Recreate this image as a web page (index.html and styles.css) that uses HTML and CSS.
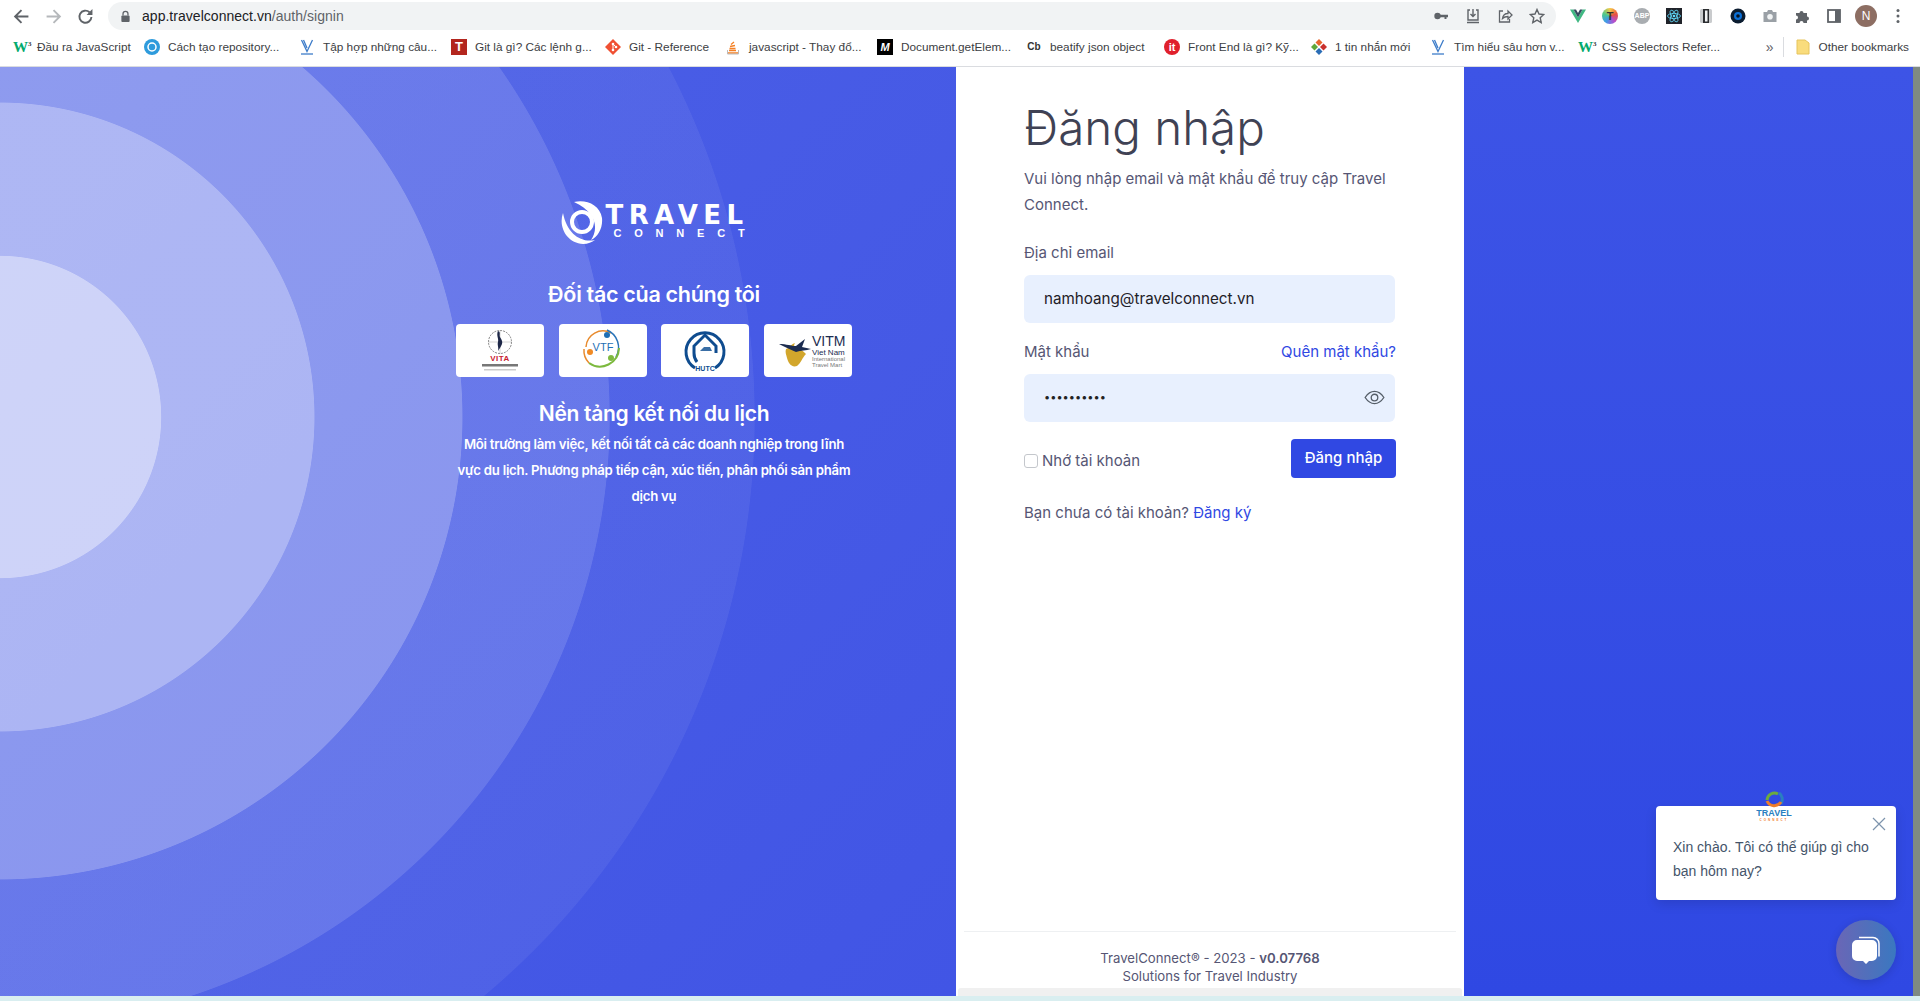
FILE: index.html
```html
<!DOCTYPE html>
<html lang="vi">
  <head>
    <meta charset="UTF-8" />
    <meta name="viewport" content="width=device-width, initial-scale=1.0" />
    <title>Travel Connect</title>
    <link rel="stylesheet" href="styles.css">
  </head>
  <body>
    <header class="chrome">
      <div class="toolbar">
        <div class="nav">
          <svg class="nav-icon" viewBox="0 0 16 16"><path d="M14.500 8H2.500M8 2 2 8l6 6" fill="none" stroke="#5f6368" stroke-width="1.800"/></svg>
          <svg class="nav-icon" viewBox="0 0 16 16"><path d="M1.500 8h12M8 2l6 6-6 6" fill="none" stroke="#b5b8bb" stroke-width="1.800"/></svg>
          <svg class="nav-icon" viewBox="0 0 16 16"><path d="M13.600 8.500A5.700 5.700 0 1 1 11.800 4" fill="none" stroke="#5f6368" stroke-width="1.800"/><path d="M14.500 1v5.500H9z" fill="#5f6368"/></svg>
        </div>
        <div class="omnibox">
          <svg class="lock" viewBox="0 0 12 14"><path d="M3.300 6V4a2.700 2.700 0 0 1 5.400 0v2" fill="none" stroke="#5f6368" stroke-width="1.400"/><rect x="1.500" y="6" width="9" height="7" rx="1" fill="#5f6368"/></svg>
          <span class="url">app.travelconnect.vn<span class="url-path">/auth/signin</span></span>
          <div class="omni-actions">
            <svg class="tool-icon" viewBox="0 0 16 16"><circle cx="4.500" cy="8" r="3.200" fill="#5f6368"/><path d="M7 6.700h8v2.600h-1.500V11h-2V9.300H7z" fill="#5f6368"/></svg>
            <svg class="tool-icon" viewBox="0 0 16 16"><path d="M5 2H3v10h10V2h-2M8 1v7.500M5.500 6 8 8.500 10.500 6M2 14.500h12" fill="none" stroke="#5f6368" stroke-width="1.400"/></svg>
            <svg class="tool-icon" viewBox="0 0 16 16"><path d="M6 3H2.500v11h10v-3M5.500 10.500C6 7 8.500 5.500 11 5.500V3l4 4-4 4V8.500c-2 0-4 .5-5.500 2z" fill="none" stroke="#5f6368" stroke-width="1.300"/></svg>
            <svg class="tool-icon" viewBox="0 0 16 16"><path d="m8 1.500 2 4.500 4.800.5-3.600 3.200 1 4.800L8 12.100l-4.200 2.400 1-4.800L1.200 6.500 6 6z" fill="none" stroke="#5f6368" stroke-width="1.400"/></svg>
          </div>
        </div>
        <div class="extensions">
          <svg class="ext-icon" viewBox="0 0 16 16"><path d="M0 1.500h3.500L8 9.500l4.500-8H16L8 15z" fill="#41b883"/><path d="M3.500 1.500H6L8 5l2-3.500h2.500L8 9.500z" fill="#35495e"/></svg>
          <span class="ext-t">T</span>
          <span class="ext-abp">ABP</span>
          <svg class="ext-icon" viewBox="0 0 16 16"><rect width="16" height="16" fill="#20232a"/><g fill="none" stroke="#61dafb" stroke-width=".8"><ellipse cx="8" cy="8" rx="6.500" ry="2.600"/><ellipse cx="8" cy="8" rx="6.500" ry="2.600" transform="rotate(60 8 8)"/><ellipse cx="8" cy="8" rx="6.500" ry="2.600" transform="rotate(120 8 8)"/></g><circle cx="8" cy="8" r="1.300" fill="#61dafb"/></svg>
          <svg class="ext-icon" viewBox="0 0 16 16"><rect x="2" y="1" width="12" height="14" rx="1.500" fill="#c9cbcd"/><rect x="5" y="1" width="6" height="14" fill="#2b2d30"/><rect x="7" y="2.500" width="2.500" height="11" fill="#f1f3f4"/></svg>
          <svg class="ext-icon" viewBox="0 0 16 16"><circle cx="8" cy="8" r="7.500" fill="#0b1c30"/><circle cx="8" cy="8" r="4" fill="#0b6fd6"/><circle cx="8" cy="8" r="1.800" fill="#06131f"/></svg>
          <svg class="ext-icon" viewBox="0 0 16 16"><path d="M1.500 4H5l1-2h4l1 2h3.500v10h-13z" fill="#9aa0a6"/><circle cx="8" cy="8.800" r="2.800" fill="#f1f3f4"/></svg>
          <svg class="ext-icon" viewBox="0 0 16 16"><path d="M2 5h3.500a2 2 0 1 1 4 0H13v3.500a2 2 0 1 1 0 4V15H9.500a2 2 0 1 0-4 0H2v-3.500a2 2 0 1 0 0-4z" fill="#5f6368"/></svg>
          <svg class="ext-icon" viewBox="0 0 16 16"><rect x="2" y="2" width="12" height="12" fill="none" stroke="#5f6368" stroke-width="1.800"/><rect x="9" y="2" width="5" height="12" fill="#5f6368"/></svg>
          <span class="avatar">N</span>
          <svg class="ext-icon" viewBox="0 0 16 16"><g fill="#5f6368"><circle cx="8" cy="2.500" r="1.500"/><circle cx="8" cy="8" r="1.500"/><circle cx="8" cy="13.500" r="1.500"/></g></svg>
        </div>
      </div>

      <nav class="bookmarks">
        <div class="bookmark-grid">
          <a class="bookmark"><span class="fav fav-w3">W<sup>3</sup></span>Đầu ra JavaScript</a>
          <a class="bookmark"><svg class="fav-svg" viewBox="0 0 16 16"><circle cx="8" cy="8" r="8" fill="#2e9bdc"/><rect x="4" y="4" width="8" height="8" rx="4" fill="none" stroke="#fff" stroke-width="1.500"/></svg>Cách tạo repository...</a>
          <a class="bookmark"><svg class="fav-svg" viewBox="0 0 16 16"><path d="M2.500 1 8 12.500 13.500 1M4.500 1 8 9" fill="none" stroke="#3d7cc9" stroke-width="1.300"/><path d="M2 15h12" stroke="#3d7cc9" stroke-width="1.300"/></svg>Tập hợp những câu...</a>
          <a class="bookmark"><span class="fav fav-t">T</span>Git là gì? Các lệnh g...</a>
          <a class="bookmark"><svg class="fav-svg" viewBox="0 0 16 16"><path d="M8 0 16 8 8 16 0 8z" fill="#f05033"/><circle cx="8" cy="5" r="1.300" fill="#fff"/><circle cx="8" cy="11" r="1.300" fill="#fff"/><circle cx="11" cy="8" r="1.300" fill="#fff"/><path d="M8 5v6M8 5l3 3" stroke="#fff"/></svg>Git - Reference</a>
          <a class="bookmark"><svg class="fav-svg" viewBox="0 0 16 16"><path d="M3 14h10M4 11.500h7M4.500 9.500h6M5 7.500l5-1M6 5.500 9 3" stroke="#f48024" stroke-width="1.300" fill="none"/><path d="M2.500 11v4h11v-4" fill="none" stroke="#bcbbbb"/></svg>javascript - Thay đổ...</a>
          <a class="bookmark"><span class="fav fav-m">M</span>Document.getElem...</a>
          <a class="bookmark"><span class="fav fav-cb">Cb</span>beatify json object</a>
          <a class="bookmark"><span class="fav fav-it">it</span>Front End là gì? Kỹ...</a>
          <a class="bookmark"><svg class="fav-svg" viewBox="0 0 16 16"><path d="m8 0 3.500 3.500L8 7 4.500 3.500z" fill="#e8662c"/><path d="m12.500 4.500 3.500 3.500-3.500 3.500L9 8z" fill="#c9302c"/><path d="m3.500 4.500 3.500 3.500-3.500 3.500L0 8z" fill="#5fa83b"/><path d="m8 9 3.500 3.500L8 16l-3.500-3.500z" fill="#2a6db5"/></svg>1 tin nhắn mới</a>
          <a class="bookmark"><svg class="fav-svg" viewBox="0 0 16 16"><path d="M2.500 1 8 12.500 13.500 1M4.500 1 8 9" fill="none" stroke="#3d7cc9" stroke-width="1.300"/><path d="M2 15h12" stroke="#3d7cc9" stroke-width="1.300"/></svg>Tìm hiểu sâu hơn v...</a>
          <a class="bookmark"><span class="fav fav-w3">W<sup>3</sup></span>CSS Selectors Refer...</a>
        </div>
        <div class="bookmarks-end">
          <span class="more">»</span>
          <span class="sep"></span>
          <svg class="fav-svg" viewBox="0 0 16 16"><path d="M2 1h8l4 3v11H2z" fill="#f9dc7c" stroke="#e6c45c"/></svg>
          <span>Other bookmarks</span>
        </div>
      </nav>
    </header>

    <main class="page">
      <section class="intro">
        <div class="brand">
          <svg class="brand-mark" viewBox="0 0 42 44">
            <circle cx="21" cy="22" r="10" fill="none" stroke="#fff" stroke-width="4"/>
            <path d="M13 2C24-1 39 4 41 18c1 10-4 19-11 22 7-10 7-27-17-38z" fill="#fff"/>
            <path d="M2 13C-3 27 6 43 22 44c5 0 9-2 12-4C20 43 6 34 2 13z" fill="#fff"/>
          </svg>
          <div class="brand-name">
            <span class="brand-travel">TRAVEL</span>
            <span class="brand-connect">CONNECT</span>
          </div>
        </div>

        <h2 class="partners-title">Đối tác của chúng tôi</h2>

        <div class="partners">
          <div class="partner">
            <svg viewBox="0 0 88 53">
              <circle cx="44" cy="18" r="11.500" fill="none" stroke="#555" stroke-width=".7" stroke-dasharray="2 1"/>
              <path d="M32.500 18h23M44 6.500v23" stroke="#aaa" stroke-width=".5"/>
              <path d="M42 7c3 1 1 4 2 6s3 4 2 7-3 5-4 7c1-4-1-6 0-9s-2-7 0-11z" fill="#1d2747"/>
              <text class="logo-vita" x="44" y="37" text-anchor="middle">VITA</text>
              <rect x="26" y="40" width="36" height="2.500" fill="#777"/>
              <rect x="28" y="45" width="32" height="1.500" fill="#ccc"/>
            </svg>
          </div>
          <div class="partner">
            <svg viewBox="0 0 88 53">
              <path d="M27 23a17 17 0 0 1 25-14" fill="none" stroke="#e88b2e" stroke-width="1.500"/>
              <path d="M48 6a19 19 0 0 1 9 27" fill="none" stroke="#2a74b8" stroke-width="1.500"/>
              <path d="M60 24a19 19 0 0 1-30 15" fill="none" stroke="#7cb93e" stroke-width="2"/>
              <path d="M30 39a18 18 0 0 1-5-14" fill="none" stroke="#e88b2e" stroke-width="1.500"/>
              <circle cx="48" cy="11" r="3" fill="#1f6fb5"/>
              <circle cx="31" cy="28" r="3" fill="#f08a24"/>
              <circle cx="52" cy="34" r="3" fill="#7fb940"/>
              <text class="logo-vtf" x="44" y="27" text-anchor="middle">VTF</text>
            </svg>
          </div>
          <div class="partner">
            <svg viewBox="0 0 88 53">
              <path d="M34 44a19 19 0 1 1 20 0" fill="none" stroke="#0f4c8f" stroke-width="3"/>
              <path d="M36 38a14 14 0 0 1-3-9V22l11-11 11 11v7" fill="none" stroke="#0f4c8f" stroke-width="3"/>
              <path d="M39 27h12l-2-4h-6z" fill="#3a6ea5"/>
              <text class="logo-hutc" x="44" y="47" text-anchor="middle">HUTC</text>
            </svg>
          </div>
          <div class="partner">
            <svg viewBox="0 0 88 53">
              <path d="M22 25c4-1 5-5 9-6-2 3 0 4 1 6 3-1 7 2 10 5-4 4-5 9-9 12-6 2-9-4-10-8s-2-6-1-9z" fill="#d2a62c"/>
              <path d="M15 20c8 0 12 2 17 2l9-7-3 8 9 2c-5 2-10 1-15 3-6-3-12-5-17-8z" fill="#1c2c50"/>
              <text class="logo-vitm" x="48" y="22">VITM</text>
              <text class="logo-vitm-sub" x="48" y="31">Viet Nam</text>
              <text class="logo-vitm-tiny" x="48" y="37">International</text>
              <text class="logo-vitm-tiny" x="48" y="43">Travel Mart</text>
            </svg>
          </div>
        </div>

        <h2 class="platform-title">Nền tảng kết nối du lịch</h2>
        <p class="platform-text">Môi trường làm việc, kết nối tất cả các doanh nghiệp trong lĩnh vực du lịch. Phương pháp tiếp cận, xúc tiến, phân phối sản phẩm dịch vụ</p>
      </section>

      <section class="signin">
        <div class="signin-form">
          <h1>Đăng nhập</h1>
          <p class="lead">Vui lòng nhập email và mật khẩu để truy cập Travel Connect.</p>

          <div class="form-group">
            <label for="email">Địa chỉ email</label>
            <input type="text" id="email" value="namhoang@travelconnect.vn" />
          </div>

          <div class="form-group">
            <div class="label-row">
              <label for="password">Mật khẩu</label>
              <a class="link">Quên mật khẩu?</a>
            </div>
            <div class="password-box">
              <input type="password" id="password" value="1234567890" />
              <svg class="eye" viewBox="0 0 22 16"><path d="M1 8c3-4.500 6-6.500 10-6.500S18 3.500 21 8c-3 4.500-6 6.500-10 6.500S4 12.500 1 8z" fill="none" stroke="#555e68" stroke-width="1.400"/><circle cx="11" cy="8" r="3.500" fill="none" stroke="#555e68" stroke-width="1.400"/></svg>
            </div>
          </div>

          <div class="actions">
            <label class="remember"><span class="checkbox"></span>Nhớ tài khoản</label>
            <button type="button">Đăng nhập</button>
          </div>

          <p class="register">Bạn chưa có tài khoản? <a class="link">Đăng ký</a></p>
        </div>

        <footer class="signin-footer">
          <div>TravelConnect® - 2023 - <b>v0.07768</b></div>
          <div>Solutions for Travel Industry</div>
        </footer>
        <div class="footer-strip"></div>
      </section>

      <section class="filler"></section>

      <div class="scrollbar"></div>

      <aside class="chat-popup">
        <svg class="chat-logo" viewBox="0 0 44 34">
          <path d="M15 11a7.500 7.500 0 0 1 11-6" fill="none" stroke="#6cab3f" stroke-width="3"/>
          <path d="M27 4a8 8 0 0 1 2 11" fill="none" stroke="#2a7fc0" stroke-width="3"/>
          <path d="M29 13a8 8 0 0 1-14-1" fill="none" stroke="#ef7d2b" stroke-width="3"/>
          <text class="chat-logo-name" x="22" y="27" text-anchor="middle">TRAVEL</text>
          <text class="chat-logo-sub" x="22" y="32" text-anchor="middle">CONNECT</text>
        </svg>
        <svg class="chat-close" viewBox="0 0 14 14"><path d="m1 1 12 12M13 1 1 13" stroke="#7d94ad" stroke-width="1.200"/></svg>
        Xin chào. Tôi có thể giúp gì cho bạn hôm nay?
      </aside>

      <div class="chat-button">
        <svg viewBox="0 0 32 32">
          <path d="M9 3.500h14a6 6 0 0 1 6 6v13" fill="none" stroke="#fff" stroke-width="1.500"/>
          <path d="M7 6h15a5 5 0 0 1 5 5v11a5 5 0 0 1-5 5h-3l-3 3-3-3H7a5 5 0 0 1-5-5V11a5 5 0 0 1 5-5z" fill="#fff"/>
        </svg>
      </div>
    </main>
  </body>
</html>
```

FILE: styles.css
```css
* {
  box-sizing: border-box;
}
html,
body {
  height: 100%;
}
body {
  margin: 0;
  display: flex;
  flex-direction: column;
  overflow: hidden;
  font-family: Inter, "Noto Sans", sans-serif;
  background-color: #d9eef0;
  color: #565674;
}

/* browser chrome */
.chrome {
  height: 67px;
  flex: none;
  background-color: white;
  border-bottom: 1px solid #dadce0;
  font-family: "Liberation Sans", Arial, sans-serif;
}
.toolbar {
  height: 32px;
  padding: 2px 0 0 6px;
  display: flex;
  align-items: flex-start;
}
.nav {
  width: 102px;
  height: 28px;
  display: flex;
  align-items: center;
  gap: 15px;
  padding-left: 7px;
}
.nav-icon {
  width: 17px;
  height: 17px;
}
.omnibox {
  width: 1448px;
  height: 28px;
  border-radius: 14px;
  background-color: #f1f3f4;
  display: flex;
  align-items: center;
  padding: 0 11px 0 12px;
}
.lock {
  width: 11px;
  height: 13px;
  margin-right: 11px;
}
.url {
  font-size: 14px;
  letter-spacing: 0.03px;
  color: #202124;
}
.url-path {
  color: #5f6368;
}
.omni-actions {
  margin-left: auto;
  display: flex;
  gap: 16px;
}
.tool-icon {
  width: 16px;
  height: 16px;
}
.extensions {
  height: 28px;
  display: flex;
  align-items: center;
  gap: 16px;
  padding-left: 14px;
}
.ext-icon {
  width: 16px;
  height: 16px;
  flex: none;
}
.ext-t {
  width: 16px;
  height: 16px;
  border-radius: 50%;
  background: conic-gradient(#f6c945, #e8503f, #b44fd0, #3f9be8, #4fc98a, #f6c945);
  font-size: 11px;
  font-weight: bold;
  text-align: center;
  line-height: 16px;
  color: #333;
}
.ext-abp {
  width: 16px;
  height: 16px;
  border-radius: 50%;
  background-color: #a9adb1;
  font-size: 7px;
  font-weight: bold;
  text-align: center;
  line-height: 16px;
  color: white;
}
.avatar {
  width: 22px;
  height: 22px;
  margin: 0 -3px;
  flex: none;
  border-radius: 50%;
  background-color: #8d6e63;
  color: white;
  font-size: 12px;
  text-align: center;
  line-height: 22px;
}

.bookmarks {
  height: 30px;
  padding-left: 13px;
  display: flex;
  align-items: center;
  font-size: 11.8px;
  color: #3c4043;
}
.bookmark-grid {
  display: grid;
  grid-template-columns: 131px 155px 152px 154px 120px 152px 149px 138px 147px 119px 148px 150px;
}
.bookmark {
  display: flex;
  align-items: center;
  gap: 8px;
  white-space: nowrap;
}
.fav,
.fav-svg {
  width: 16px;
  height: 16px;
  flex: none;
}
.fav {
  display: block;
  text-align: center;
  line-height: 16px;
  font-weight: bold;
}
.fav-w3 {
  color: #04aa6d;
  font-size: 15px;
  font-family: "Liberation Serif", serif;
  white-space: nowrap;
}
.fav-w3 sup {
  font-size: 7px;
  line-height: 0;
  color: #333;
}
.fav-t {
  background-color: #b3261e;
  color: white;
  font-size: 13px;
}
.fav-m {
  background-color: black;
  color: white;
  font-size: 11px;
  font-style: italic;
}
.fav-cb {
  color: #333;
  font-size: 10px;
}
.fav-it {
  background-color: #e0202c;
  color: white;
  border-radius: 50%;
  font-size: 11px;
}
.bookmarks-end {
  margin-left: auto;
  padding-right: 11px;
  display: flex;
  align-items: center;
  gap: 8px;
}
.more {
  font-size: 14px;
  color: #5f6368;
  margin-right: 1px;
}
.sep {
  width: 1px;
  height: 20px;
  background-color: #dadce0;
  margin-right: 3px;
}

/* page */
.page {
  position: relative;
  height: 929px;
  flex: none;
  display: flex;
  background: linear-gradient(180deg, #3d54e6, #2f48e3);
}
.intro {
  width: 956px;
  flex: none;
  padding: 133px 0 0 352px;
  display: flex;
  flex-direction: column;
  align-items: center;
  color: white;
  background:
    radial-gradient(circle 755px at 0 350px,
      rgba(255, 255, 255, 0.73) 21.3%, rgba(255, 255, 255, 0.55) 21.4%,
      rgba(255, 255, 255, 0.55) 41.6%, rgba(255, 255, 255, 0.37) 41.7%,
      rgba(255, 255, 255, 0.37) 61.2%, rgba(255, 255, 255, 0.18) 61.3%,
      rgba(255, 255, 255, 0.18) 80.7%, rgba(255, 255, 255, 0.06) 80.8%,
      rgba(255, 255, 255, 0.06) 99.9%, rgba(255, 255, 255, 0) 100%),
    linear-gradient(135deg, #4c60e6 0, #4155e5 100%);
}
.brand {
  width: 188px;
  height: 45px;
  display: flex;
  gap: 3px;
  margin-left: 1px;
}
.brand-mark {
  width: 42px;
  height: 44px;
  flex: none;
}
.brand-name {
  display: flex;
  flex-direction: column;
  font-family: "DejaVu Sans", sans-serif;
  font-weight: bold;
  padding-top: 3px;
}
.brand-travel {
  font-size: 26px;
  line-height: 25px;
  letter-spacing: 5.4px;
}
.brand-connect {
  font-family: "Liberation Sans", Arial, sans-serif;
  font-size: 11px;
  line-height: 11px;
  letter-spacing: 12.8px;
  padding-left: 8px;
  white-space: nowrap;
}
.partners-title {
  margin: 34px 0 0;
  font-size: 21.5px;
  line-height: 30px;
  font-weight: 600;
  letter-spacing: -0.3px;
}
.partners {
  margin-top: 15px;
  width: 396px;
  display: grid;
  grid-template-columns: repeat(4, 88px);
  justify-content: space-between;
}
.partner {
  height: 53px;
  border-radius: 4px;
  background-color: white;
}
.partner svg {
  display: block;
  width: 100%;
  height: 100%;
}
.logo-vita {
  font: bold 8px "Liberation Sans", sans-serif;
  fill: #c8202f;
  letter-spacing: 0.5px;
}
.logo-vtf {
  font: 11px "Liberation Sans", sans-serif;
  fill: #1f6fb5;
}
.logo-hutc {
  font: bold 7px "Liberation Sans", sans-serif;
  fill: #0f4c8f;
}
.logo-vitm {
  font: 14px "Liberation Sans", sans-serif;
  fill: #1c2c50;
}
.logo-vitm-sub {
  font: 8px "Liberation Sans", sans-serif;
  fill: #1c2c50;
}
.logo-vitm-tiny {
  font: 6px "Liberation Sans", sans-serif;
  fill: #777;
}
.platform-title {
  margin: 22px 0 0;
  font-size: 21px;
  line-height: 30px;
  font-weight: 600;
  letter-spacing: -0.3px;
}
.platform-text {
  margin: 2px 0 0;
  width: 402px;
  font-size: 13.2px;
  line-height: 26px;
  font-weight: 600;
  text-align: center;
  letter-spacing: -0.25px;
}

/* sign in card */
.signin {
  width: 508px;
  flex: none;
  background-color: white;
  display: flex;
  flex-direction: column;
}
.signin-form {
  flex: 1;
  padding: 26px 68px 0;
}
h1 {
  margin: 0;
  font-size: 47.5px;
  line-height: 70px;
  font-weight: 300;
  color: #3f4254;
}
.lead {
  margin: 3px 0 0;
  font-size: 15px;
  line-height: 26px;
}
.form-group {
  margin-top: 22px;
}
label {
  display: block;
  font-size: 15px;
  line-height: 26px;
}
.label-row {
  display: flex;
  justify-content: space-between;
}
.link {
  font-size: 15px;
  line-height: 26px;
  color: #3048e3;
}
.form-group input {
  display: block;
  width: 371px;
  height: 48px;
  margin-top: 9px;
  padding: 0 20px 2px;
  border: none;
  border-radius: 6px;
  outline: none;
  background-color: #e8f0fe;
  font-family: inherit;
  font-size: 15.2px;
  color: #1f2128;
}
.form-group input[type="password"] {
  font-size: 11px;
  color: #222;
}
.form-group + .form-group {
  margin-top: 16px;
}
.password-box {
  position: relative;
}
.eye {
  position: absolute;
  right: 11px;
  top: 16px;
  width: 21px;
  height: 15px;
}
.actions {
  margin-top: 17px;
  display: flex;
  justify-content: space-between;
  align-items: flex-start;
  width: 372px;
}
.remember {
  display: flex;
  align-items: center;
  gap: 4px;
  margin-top: 9px;
}
.checkbox {
  width: 14px;
  height: 14px;
  border: 1px solid #c4c7cc;
  border-radius: 3px;
  background-color: white;
}
button {
  width: 105px;
  height: 39px;
  padding-bottom: 3px;
  border: none;
  border-radius: 4px;
  background-color: #3048e3;
  color: white;
  font-family: inherit;
  font-size: 15px;
  font-weight: 500;
}
.register {
  margin: 22px 0 0;
  font-size: 15px;
  line-height: 26px;
}
.signin-footer {
  margin: 0 8px;
  padding: 17px 0 3px;
  border-top: 1px solid #eef0f2;
  text-align: center;
  font-size: 13.2px;
  line-height: 18px;
}
.signin-footer b {
  font-weight: 600;
}
.footer-strip {
  height: 8px;
  margin: 0 2px;
  border-radius: 3px 3px 0 0;
  background-color: #f0f0f0;
}

.filler {
  flex: 1;
}
.scrollbar {
  width: 7px;
  flex: none;
  background-color: #7f8a82;
}

/* chat widget */
.chat-popup {
  position: absolute;
  left: 1656px;
  top: 739px;
  width: 240px;
  height: 94px;
  padding: 29px 16px 0 17px;
  border-radius: 4px;
  background-color: white;
  box-shadow: 0 4px 12px rgba(0, 0, 0, 0.12);
  font-family: "Liberation Sans", Arial, sans-serif;
  font-size: 14px;
  line-height: 24px;
  color: #44546a;
}
.chat-logo {
  position: absolute;
  left: 96px;
  top: -17px;
  width: 44px;
  height: 34px;
}
.chat-logo-name {
  font: bold 9px "Liberation Sans", sans-serif;
  fill: #2a7fc0;
}
.chat-logo-sub {
  font: bold 3px "Liberation Sans", sans-serif;
  fill: #ef7d2b;
  letter-spacing: 2px;
}
.chat-close {
  position: absolute;
  right: 10px;
  top: 11px;
  width: 14px;
  height: 14px;
}
.chat-button {
  position: absolute;
  left: 1836px;
  top: 853px;
  width: 60px;
  height: 60px;
  padding: 14px;
  border-radius: 50%;
  background: linear-gradient(90deg, #6a66b6, #3a78c0);
  box-shadow: 0 2px 10px rgba(0, 0, 0, 0.15);
}
.chat-button svg {
  display: block;
  width: 32px;
  height: 32px;
}
```
